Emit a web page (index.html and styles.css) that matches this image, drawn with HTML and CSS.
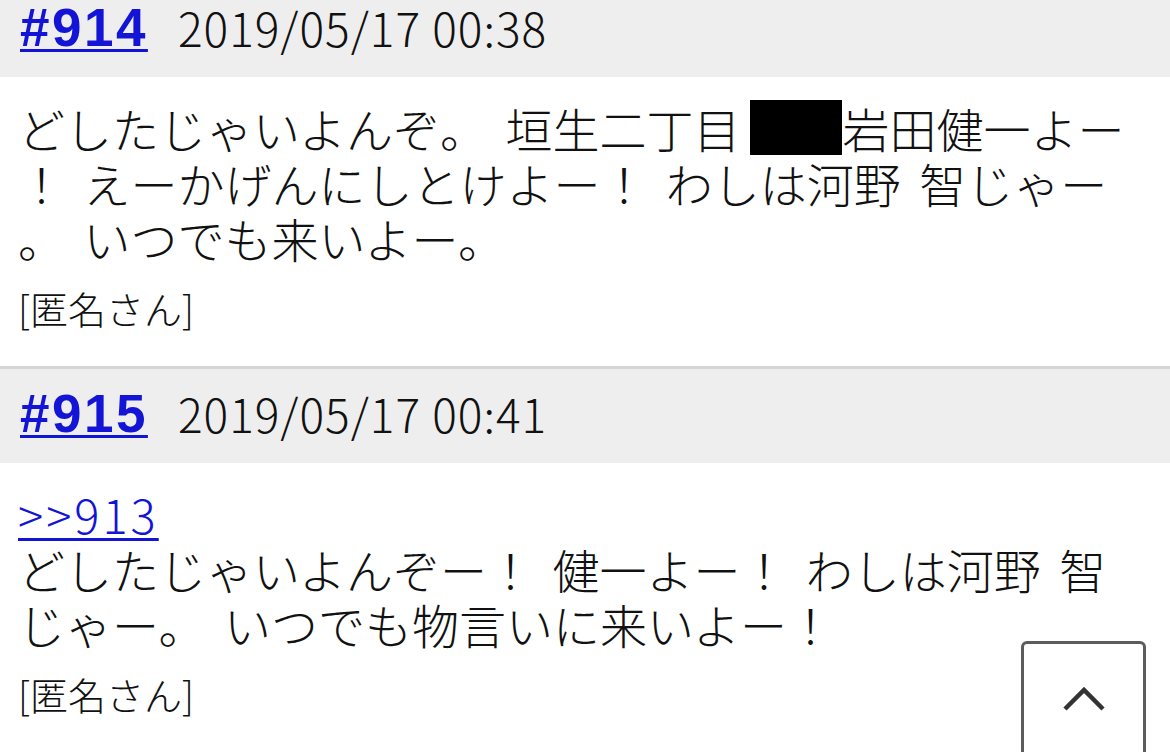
FILE: index.html
```html
<!DOCTYPE html>
<html lang="ja">

<head>
    <meta charset="UTF-8">
    <meta name="viewport" content="width=device-width, initial-scale=1.0">
    <title>レス一覧</title>
    <link rel="stylesheet" href="styles.css">
</head>

<body>
    <div class="thread">
        <div class="res">
            <div class="res-head">
                <a href="#res914" class="res-no">#914</a>
                <span class="res-date">2019/05/17 00:38</span>
            </div>
            <div class="res-body">
                <p class="res-text">どしたじゃいよんぞ。 垣生二丁目<span class="mask"></span>岩田健一よー<br>！ えーかげんにしとけよー！ わしは河野 智じゃー<br>。 いつでも来いよー。</p>
                <p class="res-name">[匿名さん]</p>
            </div>
        </div>
        <div class="res">
            <div class="res-head">
                <a href="#res915" class="res-no">#915</a>
                <span class="res-date">2019/05/17 00:41</span>
            </div>
            <div class="res-body">
                <p class="res-text"><a href="#res913" class="anchor">&gt;&gt;913</a><br>どしたじゃいよんぞー！ 健一よー！ わしは河野 智<br>じゃー。 いつでも物言いに来いよー！</p>
                <p class="res-name">[匿名さん]</p>
            </div>
        </div>
    </div>

    <a href="#top" class="to-top" aria-label="ページトップへ">
        <svg width="44" height="26" viewBox="0 0 44 26">
            <polyline points="3,23 22,4 41,23" fill="none" stroke="#333" stroke-width="4.5" />
        </svg>
    </a>
</body>

</html>
```

FILE: styles.css
```css
body {
    margin: 0;
    background-color: #ffffff;
    color: #111111;
    font-family: "Noto Sans CJK JP", "Noto Sans", sans-serif;
    font-weight: 300;
}

/* page is scrolled a little, first header is cut */
.thread {
    margin-top: -17px;
}

.res {
    border-bottom: 3px solid #d5d5d5;
}

.res-head {
    height: 94px;
    box-sizing: border-box;
    background-color: #eeeeee;
    display: flex;
    align-items: center;
    gap: 30px;
    padding: 0 20px 6px;
}

.res-no {
    font-family: "Liberation Sans", Arial, sans-serif;
    font-weight: bold;
    font-size: 53px;
    letter-spacing: 2.5px;
    color: #1414d6;
    text-decoration-thickness: 3px;
    text-underline-offset: 3px;
}

.res-date {
    font-size: 46px;
    letter-spacing: 1px;
    color: #111111;
}

.res-body {
    padding: 23px 18px 33px;
}

.res-text {
    margin: 0;
    font-size: 47px;
    line-height: 55px;
    word-spacing: 8px;
}

.mask {
    display: inline-block;
    width: 92px;
    height: 55px;
    margin-left: 10px;
    vertical-align: top;
    background-color: #000000;
}

.anchor {
    color: #1414d6;
    letter-spacing: 3px;
    text-decoration-thickness: 3px;
    text-underline-offset: 4px;
}

.res-name {
    margin: 18px 0 0;
    font-size: 38px;
    line-height: 50px;
}

.to-top {
    position: fixed;
    top: 641px;
    right: 24px;
    width: 125px;
    height: 130px;
    border: 3px solid #5c5c5c;
    border-radius: 6px;
    background-color: #ffffff;
    display: flex;
    justify-content: center;
    padding-top: 42px;
    box-sizing: border-box;
}
```
